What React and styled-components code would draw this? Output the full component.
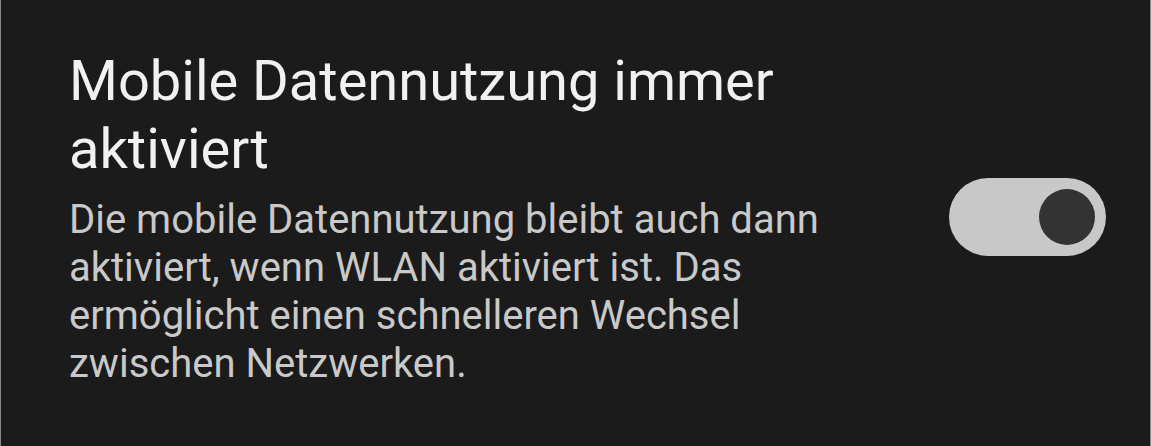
import React, { useState } from 'react'
import styled, { createGlobalStyle } from 'styled-components'

const GlobalStyle = createGlobalStyle`
    html, body {
        margin: 0;
        padding: 0;
        background: #1b1b1b;
    }
`

const Row = styled.div`
    box-sizing: border-box;
    width: 1151px;
    height: 446px;
    display: flex;
    align-items: center;
    gap: 68px;
    padding: 0 44px 12px 68px;
    background: #1b1b1b;
    border-left: 1px solid #8a8a8a;
    border-right: 1px solid #8a8a8a;
    font-family: Roboto, "Noto Sans", sans-serif;
`

const Texts = styled.div`
    flex: 1;
    display: flex;
    flex-direction: column;
    gap: 13px;
`

const Title = styled.div`
    font-size: 56px;
    line-height: 68px;
    color: #f1f1f1;
`

const Summary = styled.div`
    font-size: 40px;
    line-height: 48px;
    color: #c9c9c9;
`

const Track = styled.button`
    flex: none;
    position: relative;
    width: 157px;
    height: 78px;
    padding: 0;
    border: none;
    border-radius: 39px;
    background: #c8c8c8;
    cursor: pointer;
`

const Thumb = styled.span`
    position: absolute;
    top: 11px;
    left: ${p => (p.$on ? '90px' : '12px')};
    width: 56px;
    height: 56px;
    border-radius: 50%;
    background: #333333;
`

const App = () => {
    const [on, setOn] = useState(true)
    return (
        <>
            <GlobalStyle />
            <Row>
                <Texts>
                    <Title>Mobile Datennutzung immer aktiviert</Title>
                    <Summary>
                        Die mobile Datennutzung bleibt auch dann aktiviert, wenn WLAN aktiviert ist. Das ermöglicht einen schnelleren Wechsel zwischen Netzwerken.
                    </Summary>
                </Texts>
                <Track onClick={() => setOn(!on)}>
                    <Thumb $on={on} />
                </Track>
            </Row>
        </>
    )
}

export default App
